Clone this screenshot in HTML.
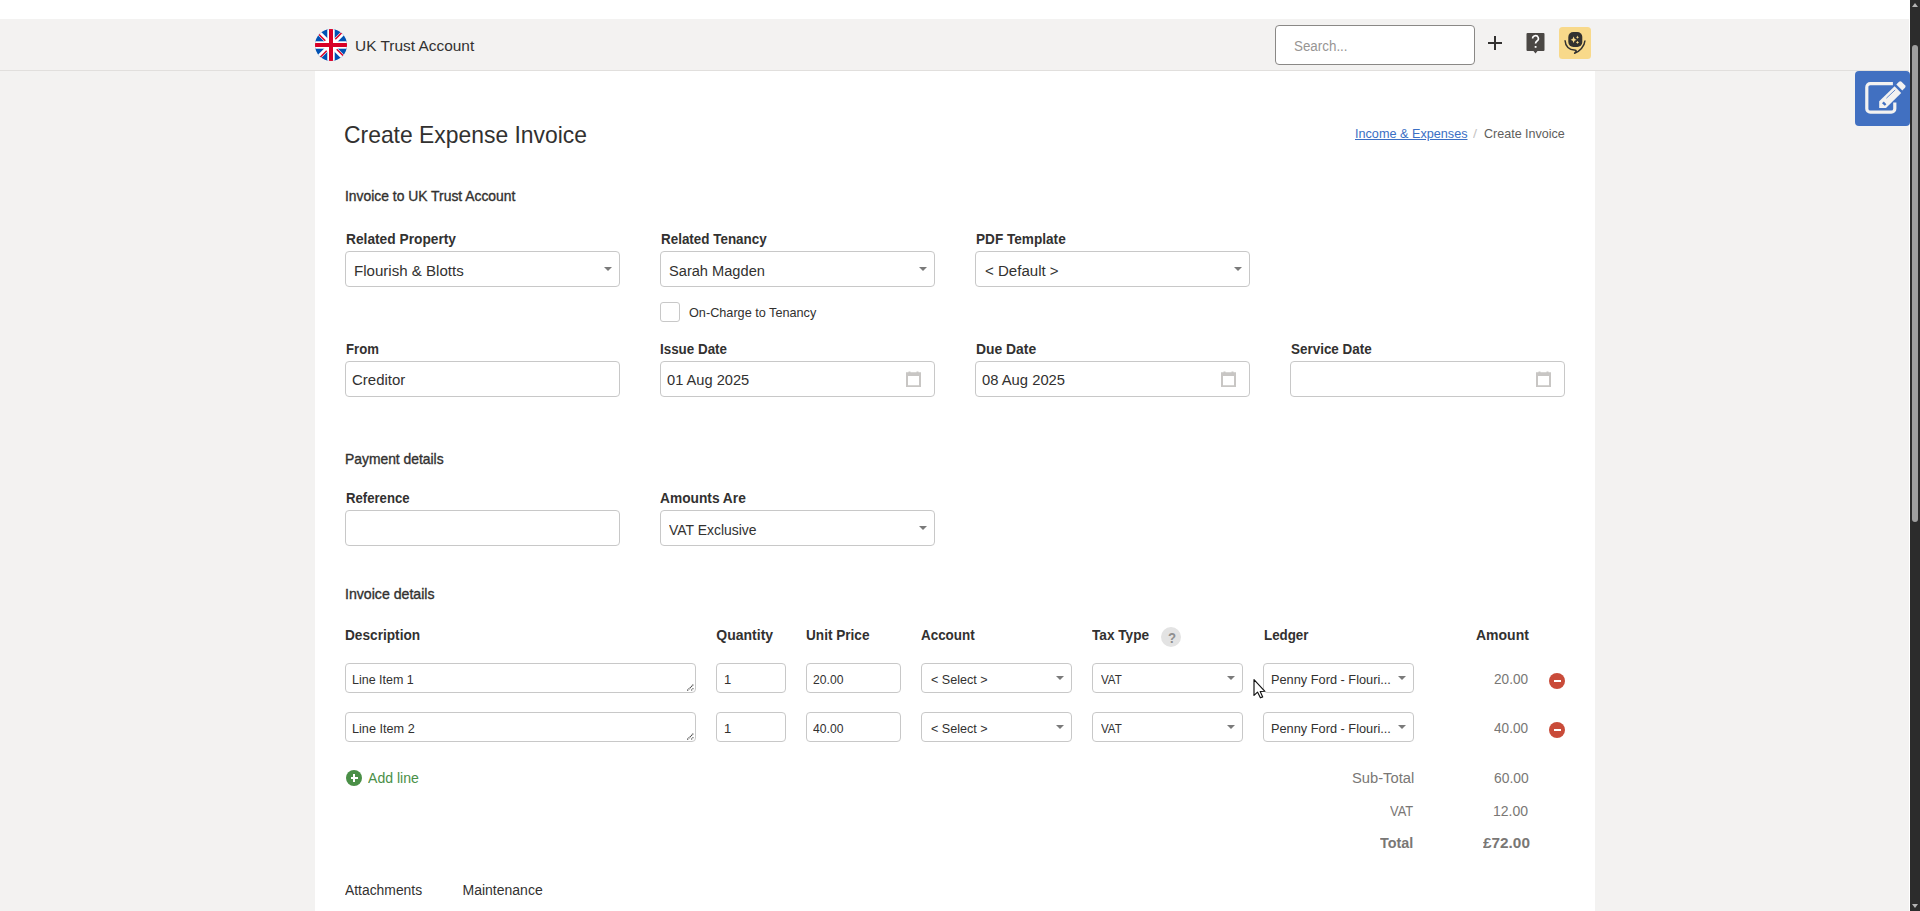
<!DOCTYPE html>
<html><head><meta charset="utf-8"><style>
html,body{margin:0;padding:0;}
body{width:1920px;height:911px;overflow:hidden;position:relative;background:#f3f2f1;font-family:"Liberation Sans", sans-serif;}
.t{position:absolute;white-space:pre;font-family:"Liberation Sans", sans-serif;}
</style></head><body>
<div style='position:absolute;left:0;top:0;width:1910px;height:19px;background:#fff'></div>
<div style='position:absolute;left:0;top:19px;width:1909px;height:51px;background:#f3f2f1;border-bottom:1px solid #e1dfdd'></div>
<div style='position:absolute;left:1909px;top:19px;width:1px;height:892px;background:#fff'></div>
<div style='position:absolute;left:315px;top:71px;width:1280px;height:840px;background:#fff'></div>
<div style='position:absolute;left:1910px;top:0;width:10px;height:911px;background:#2c2c2c'></div>
<div style='position:absolute;left:1912px;top:45px;width:6px;height:477px;background:#9f9f9f;border-radius:3px'></div>
<div style='position:absolute;left:1912px;top:3px;width:0;height:0;border-left:3px solid transparent;border-right:3px solid transparent;border-bottom:4px solid #b4b4b4'></div>
<div style='position:absolute;left:1912px;top:904px;width:0;height:0;border-left:3px solid transparent;border-right:3px solid transparent;border-top:4px solid #b4b4b4'></div>
<svg style='position:absolute;left:315px;top:29px' width='32' height='32' viewBox='0 0 32 32'>
<defs><clipPath id='cc'><circle cx='16' cy='16' r='16'/></clipPath></defs>
<g clip-path='url(#cc)'>
<rect width='32' height='32' fill='#0052b4'/>
<path d='M0 0 L32 32 M32 0 L0 32' stroke='#fff' stroke-width='4.6'/>
<path d='M2 2 L11 11' stroke='#d80027' stroke-width='1.5' transform='translate(-0.7,0.7)'/>
<path d='M21 21 L30 30' stroke='#d80027' stroke-width='1.5' transform='translate(0.7,-0.7)'/>
<path d='M30 2 L21 11' stroke='#d80027' stroke-width='1.5' transform='translate(-0.7,-0.7)'/>
<path d='M11 21 L2 30' stroke='#d80027' stroke-width='1.5' transform='translate(0.7,0.7)'/>
<rect x='12.3' y='0' width='7.4' height='32' fill='#fff'/><rect x='0' y='12.3' width='32' height='7.4' fill='#fff'/>
<rect x='14' y='0' width='4' height='32' fill='#d80027'/><rect x='0' y='14' width='32' height='4' fill='#d80027'/>
</g></svg>
<div style='position:absolute;left:1275px;top:25px;width:198px;height:38px;border:1px solid #8a8886;border-radius:4px;background:#fff'></div>
<div style='position:absolute;left:1488px;top:42px;width:14px;height:2px;background:#323130'></div>
<div style='position:absolute;left:1494px;top:36px;width:2px;height:14px;background:#323130'></div>
<svg style='position:absolute;left:1526px;top:32px' width='19' height='22' viewBox='0 0 19 22'>
<path d='M1.5 1 h16 a1 1 0 0 1 1 1 v16 a1 1 0 0 1 -1 1 h-6 l-2 2.5 l-2 -2.5 h-6 a1 1 0 0 1 -1 -1 v-16 a1 1 0 0 1 1 -1z' fill='#4b4845'/>
<path d='M6.6 6.6 a2.9 2.9 0 1 1 4.4 2.4 c-1 .7 -1.5 1.2 -1.5 2.6' fill='none' stroke='#fff' stroke-width='1.6'/>
<rect x='8.7' y='14' width='1.8' height='1.8' fill='#fff'/>
</svg>
<svg style='position:absolute;left:1559px;top:27px' width='32' height='32' viewBox='0 0 32 32'>
<rect width='32' height='32' rx='3.5' fill='#f8d98a'/>
<rect x='9.3' y='5.1' width='14' height='14.8' rx='5' fill='#323130'/>
<path d='M14.6 9.6 Q15 12.4 17.6 12.8 Q15 13.2 14.6 16 Q14.2 13.2 11.6 12.8 Q14.2 12.4 14.6 9.6z' fill='#f8d98a'/>
<path d='M18.5 8.6 Q18.7 10.1 20.1 10.3 Q18.7 10.5 18.5 12 Q18.3 10.5 16.9 10.3 Q18.3 10.1 18.5 8.6z' fill='#f8d98a'/>
<path d='M18.5 13.8 Q18.7 15.2 20.1 15.4 Q18.7 15.6 18.5 17 Q18.3 15.6 16.9 15.4 Q18.3 15.2 18.5 13.8z' fill='#f8d98a'/>
<path d='M6 13.3 C6.3 19.5 10.5 22.9 15.2 22.9 C16.6 22.9 17.6 23.4 17 24.6 L15.6 26.2 C20.5 24.5 25.5 19.5 26 13.5' fill='none' stroke='#323130' stroke-width='1.5' stroke-linejoin='round'/>
</svg>
<div style='position:absolute;left:1855px;top:71px;width:55px;height:55px;background:#4170c1;border-radius:4px'></div>
<svg style='position:absolute;left:1855px;top:71px' width='55' height='55' viewBox='0 0 55 55'>
<path d='M37.9 12.7 h-22.6 a3.5 3.5 0 0 0 -3.5 3.5 v21.5 a3.5 3.5 0 0 0 3.5 3.5 h21 a3.5 3.5 0 0 0 3.5 -3.5 v-6.2' fill='none' stroke='#f3f2f1' stroke-width='3.2'/>
<path d='M24.2 37.1 V30.3 L39.6 15.3 L46.2 21.9 L31 37.1 Z' fill='#f3f2f1'/>
<path d='M41.3 13.5 L44 10.8 a1.8 1.8 0 0 1 2.5 0 L50 14.3 a1.8 1.8 0 0 1 0 2.5 L47.3 19.5 Z' fill='#f3f2f1'/>
<path d='M27 32.2 L28.8 30.6 L31.4 33.2 L29.8 34.8 Z' fill='#4170c1'/>
<path d='M31.4 27.2 L40.2 18.9' stroke='#4170c1' stroke-width='0.8'/>
</svg>
<div style='position:absolute;left:345px;top:251px;width:273px;height:34px;border:1px solid #c8c8c8;border-radius:4px;background:#fff'></div>
<div style='position:absolute;left:604.0px;top:267px;width:0;height:0;border-left:4.0px solid transparent;border-right:4.0px solid transparent;border-top:4.5px solid #7a7a7a'></div>
<div style='position:absolute;left:660px;top:251px;width:273px;height:34px;border:1px solid #c8c8c8;border-radius:4px;background:#fff'></div>
<div style='position:absolute;left:919.0px;top:267px;width:0;height:0;border-left:4.0px solid transparent;border-right:4.0px solid transparent;border-top:4.5px solid #7a7a7a'></div>
<div style='position:absolute;left:975px;top:251px;width:273px;height:34px;border:1px solid #c8c8c8;border-radius:4px;background:#fff'></div>
<div style='position:absolute;left:1234.0px;top:267px;width:0;height:0;border-left:4.0px solid transparent;border-right:4.0px solid transparent;border-top:4.5px solid #7a7a7a'></div>
<div style='position:absolute;left:660px;top:302px;width:18px;height:18px;border:1px solid #c8c8c8;border-radius:3px;background:#fff'></div>
<div style='position:absolute;left:345px;top:361px;width:273px;height:34px;border:1px solid #c8c8c8;border-radius:4px;background:#fff'></div>
<div style='position:absolute;left:660px;top:361px;width:273px;height:34px;border:1px solid #c8c8c8;border-radius:4px;background:#fff'></div>
<div style='position:absolute;left:975px;top:361px;width:273px;height:34px;border:1px solid #c8c8c8;border-radius:4px;background:#fff'></div>
<div style='position:absolute;left:1290px;top:361px;width:273px;height:34px;border:1px solid #c8c8c8;border-radius:4px;background:#fff'></div>
<svg style='position:absolute;left:905.5px;top:371px' width='15' height='16' viewBox='0 0 15 16'><path d='M1 2.5 h13 v12.8 h-13 z' fill='none' stroke='#c8c6c4' stroke-width='2'/><rect x='0' y='1.5' width='15' height='3.5' fill='#c8c6c4'/><rect x='2.5' y='0.5' width='2' height='1.5' fill='#c8c6c4'/><rect x='10.5' y='0.5' width='2' height='1.5' fill='#c8c6c4'/></svg>
<svg style='position:absolute;left:1220.5px;top:371px' width='15' height='16' viewBox='0 0 15 16'><path d='M1 2.5 h13 v12.8 h-13 z' fill='none' stroke='#c8c6c4' stroke-width='2'/><rect x='0' y='1.5' width='15' height='3.5' fill='#c8c6c4'/><rect x='2.5' y='0.5' width='2' height='1.5' fill='#c8c6c4'/><rect x='10.5' y='0.5' width='2' height='1.5' fill='#c8c6c4'/></svg>
<svg style='position:absolute;left:1535.5px;top:371px' width='15' height='16' viewBox='0 0 15 16'><path d='M1 2.5 h13 v12.8 h-13 z' fill='none' stroke='#c8c6c4' stroke-width='2'/><rect x='0' y='1.5' width='15' height='3.5' fill='#c8c6c4'/><rect x='2.5' y='0.5' width='2' height='1.5' fill='#c8c6c4'/><rect x='10.5' y='0.5' width='2' height='1.5' fill='#c8c6c4'/></svg>
<div style='position:absolute;left:345px;top:510px;width:273px;height:34px;border:1px solid #c8c8c8;border-radius:4px;background:#fff'></div>
<div style='position:absolute;left:660px;top:510px;width:273px;height:34px;border:1px solid #c8c8c8;border-radius:4px;background:#fff'></div>
<div style='position:absolute;left:919.0px;top:526px;width:0;height:0;border-left:4.0px solid transparent;border-right:4.0px solid transparent;border-top:4.5px solid #7a7a7a'></div>
<div style='position:absolute;left:345px;top:663px;width:349px;height:28px;border:1px solid #c8c8c8;border-radius:4px;background:#fff'></div>
<svg style='position:absolute;left:686px;top:683px' width='9' height='9' viewBox='0 0 9 9'>
<path d='M1.3 7.5 L7.7 1.3 M5.3 7.4 L7.7 5' stroke='#3a3a3a' stroke-width='1.1' stroke-dasharray='1.1 0.7'/></svg>
<div style='position:absolute;left:716px;top:663px;width:68px;height:28px;border:1px solid #c8c8c8;border-radius:4px;background:#fff'></div>
<div style='position:absolute;left:806px;top:663px;width:93px;height:28px;border:1px solid #c8c8c8;border-radius:4px;background:#fff'></div>
<div style='position:absolute;left:921px;top:663px;width:149px;height:28px;border:1px solid #c8c8c8;border-radius:4px;background:#fff'></div>
<div style='position:absolute;left:1056.0px;top:676px;width:0;height:0;border-left:4.0px solid transparent;border-right:4.0px solid transparent;border-top:4.5px solid #7a7a7a'></div>
<div style='position:absolute;left:1092px;top:663px;width:149px;height:28px;border:1px solid #c8c8c8;border-radius:4px;background:#fff'></div>
<div style='position:absolute;left:1227.0px;top:676px;width:0;height:0;border-left:4.0px solid transparent;border-right:4.0px solid transparent;border-top:4.5px solid #7a7a7a'></div>
<div style='position:absolute;left:1263px;top:663px;width:149px;height:28px;border:1px solid #c8c8c8;border-radius:4px;background:#fff'></div>
<div style='position:absolute;left:1398.0px;top:676px;width:0;height:0;border-left:4.0px solid transparent;border-right:4.0px solid transparent;border-top:4.5px solid #7a7a7a'></div>
<div style='position:absolute;left:1549px;top:673px;width:16px;height:16px;border-radius:50%;background:#c94b39'></div>
<div style='position:absolute;left:1553.5px;top:680px;width:7px;height:2px;background:#fff'></div>
<div style='position:absolute;left:345px;top:712px;width:349px;height:28px;border:1px solid #c8c8c8;border-radius:4px;background:#fff'></div>
<svg style='position:absolute;left:686px;top:732px' width='9' height='9' viewBox='0 0 9 9'>
<path d='M1.3 7.5 L7.7 1.3 M5.3 7.4 L7.7 5' stroke='#3a3a3a' stroke-width='1.1' stroke-dasharray='1.1 0.7'/></svg>
<div style='position:absolute;left:716px;top:712px;width:68px;height:28px;border:1px solid #c8c8c8;border-radius:4px;background:#fff'></div>
<div style='position:absolute;left:806px;top:712px;width:93px;height:28px;border:1px solid #c8c8c8;border-radius:4px;background:#fff'></div>
<div style='position:absolute;left:921px;top:712px;width:149px;height:28px;border:1px solid #c8c8c8;border-radius:4px;background:#fff'></div>
<div style='position:absolute;left:1056.0px;top:725px;width:0;height:0;border-left:4.0px solid transparent;border-right:4.0px solid transparent;border-top:4.5px solid #7a7a7a'></div>
<div style='position:absolute;left:1092px;top:712px;width:149px;height:28px;border:1px solid #c8c8c8;border-radius:4px;background:#fff'></div>
<div style='position:absolute;left:1227.0px;top:725px;width:0;height:0;border-left:4.0px solid transparent;border-right:4.0px solid transparent;border-top:4.5px solid #7a7a7a'></div>
<div style='position:absolute;left:1263px;top:712px;width:149px;height:28px;border:1px solid #c8c8c8;border-radius:4px;background:#fff'></div>
<div style='position:absolute;left:1398.0px;top:725px;width:0;height:0;border-left:4.0px solid transparent;border-right:4.0px solid transparent;border-top:4.5px solid #7a7a7a'></div>
<div style='position:absolute;left:1549px;top:722px;width:16px;height:16px;border-radius:50%;background:#c94b39'></div>
<div style='position:absolute;left:1553.5px;top:729px;width:7px;height:2px;background:#fff'></div>
<div style='position:absolute;left:1161px;top:627px;width:20px;height:20px;border-radius:50%;background:#e3e3e3'></div>
<div class='t' style='left:1167.8px;top:628.6px;font-size:15px;line-height:17px;font-weight:700;color:#8f8f8f;transform:scaleX(0.88);transform-origin:0 0'>?</div>
<div style='position:absolute;left:346px;top:770px;width:16px;height:16px;border-radius:50%;background:#4a8f47'></div>
<div style='position:absolute;left:350.5px;top:777px;width:7.5px;height:2px;background:#fff'></div>
<div style='position:absolute;left:353.25px;top:774.2px;width:2px;height:7.6px;background:#fff'></div>
<svg style='position:absolute;left:1253px;top:677px' width='14' height='22' viewBox='0 0 14 22'>
<path d='M1 2.6 L1 18.4 L4.5 15.1 L7.4 20.8 L9.7 19.9 L7.2 14.5 L11.9 14.3 Z' fill='#fff' stroke='#111' stroke-width='1.15' stroke-linejoin='round'/></svg>
<div class='t' style='left:354.50px;top:38.00px;font-size:15.5px;line-height:15.5px;font-weight:400;color:#323130;transform:scaleX(0.9952);transform-origin:0 0;'>UK Trust Account</div>
<div class='t' style='left:1293.50px;top:38.00px;font-size:15.5px;line-height:15.5px;font-weight:400;color:#979593;transform:scaleX(0.8629);transform-origin:0 0;'>Search...</div>
<div class='t' style='left:344.45px;top:122.90px;font-size:24px;line-height:24px;font-weight:400;color:#323130;transform:scaleX(0.9536);transform-origin:0 0;'>Create Expense Invoice</div>
<div class='t' style='left:1354.63px;top:126.90px;font-size:13px;line-height:13px;font-weight:400;color:#3b6fc4;transform:scaleX(0.9729);transform-origin:0 0;text-decoration:underline;'>Income &amp; Expenses</div>
<div class='t' style='left:1473.00px;top:126.90px;font-size:13px;line-height:13px;font-weight:400;color:#c8c6c4;transform:scaleX(1.1250);transform-origin:0 0;'>/</div>
<div class='t' style='left:1484.40px;top:126.90px;font-size:13px;line-height:13px;font-weight:400;color:#605e5c;transform:scaleX(0.9642);transform-origin:0 0;'>Create Invoice</div>
<div class='t' style='left:344.94px;top:189.00px;font-size:14.5px;line-height:14.5px;font-weight:400;color:#323130;transform:scaleX(0.9565);transform-origin:0 0;-webkit-text-stroke:0.35px #323130;'>Invoice to UK Trust Account</div>
<div class='t' style='left:345.80px;top:231.80px;font-size:14px;line-height:14px;font-weight:700;color:#323130;transform:scaleX(0.9818);transform-origin:0 0;'>Related Property</div>
<div class='t' style='left:660.60px;top:231.90px;font-size:14px;line-height:14px;font-weight:700;color:#323130;transform:scaleX(0.9589);transform-origin:0 0;'>Related Tenancy</div>
<div class='t' style='left:975.60px;top:231.90px;font-size:14px;line-height:14px;font-weight:700;color:#323130;transform:scaleX(0.9716);transform-origin:0 0;'>PDF Template</div>
<div class='t' style='left:353.83px;top:263.00px;font-size:15.5px;line-height:15.5px;font-weight:400;color:#323130;transform:scaleX(0.9724);transform-origin:0 0;'>Flourish &amp; Blotts</div>
<div class='t' style='left:669.40px;top:263.00px;font-size:15.5px;line-height:15.5px;font-weight:400;color:#323130;transform:scaleX(0.9430);transform-origin:0 0;'>Sarah Magden</div>
<div class='t' style='left:985.40px;top:263.00px;font-size:15.5px;line-height:15.5px;font-weight:400;color:#323130;transform:scaleX(0.9713);transform-origin:0 0;'>&lt; Default &gt;</div>
<div class='t' style='left:688.50px;top:306.10px;font-size:13px;line-height:13px;font-weight:400;color:#323130;transform:scaleX(0.9749);transform-origin:0 0;'>On-Charge to Tenancy</div>
<div class='t' style='left:345.90px;top:341.80px;font-size:14px;line-height:14px;font-weight:700;color:#323130;transform:scaleX(0.9377);transform-origin:0 0;'>From</div>
<div class='t' style='left:660.40px;top:342.00px;font-size:14px;line-height:14px;font-weight:700;color:#323130;transform:scaleX(0.9566);transform-origin:0 0;'>Issue Date</div>
<div class='t' style='left:975.60px;top:342.00px;font-size:14px;line-height:14px;font-weight:700;color:#323130;transform:scaleX(0.9918);transform-origin:0 0;'>Due Date</div>
<div class='t' style='left:1290.70px;top:342.00px;font-size:14px;line-height:14px;font-weight:700;color:#323130;transform:scaleX(0.9600);transform-origin:0 0;'>Service Date</div>
<div class='t' style='left:352.30px;top:372.00px;font-size:15.5px;line-height:15.5px;font-weight:400;color:#323130;transform:scaleX(0.9660);transform-origin:0 0;'>Creditor</div>
<div class='t' style='left:667.40px;top:372.00px;font-size:15.5px;line-height:15.5px;font-weight:400;color:#323130;transform:scaleX(0.9439);transform-origin:0 0;'>01 Aug 2025</div>
<div class='t' style='left:982.20px;top:372.00px;font-size:15.5px;line-height:15.5px;font-weight:400;color:#323130;transform:scaleX(0.9542);transform-origin:0 0;'>08 Aug 2025</div>
<div class='t' style='left:345.24px;top:452.00px;font-size:14.5px;line-height:14.5px;font-weight:400;color:#323130;transform:scaleX(0.9557);transform-origin:0 0;-webkit-text-stroke:0.35px #323130;'>Payment details</div>
<div class='t' style='left:345.70px;top:490.80px;font-size:14px;line-height:14px;font-weight:700;color:#323130;transform:scaleX(0.9394);transform-origin:0 0;'>Reference</div>
<div class='t' style='left:660.40px;top:490.80px;font-size:14px;line-height:14px;font-weight:700;color:#323130;transform:scaleX(0.9817);transform-origin:0 0;'>Amounts Are</div>
<div class='t' style='left:669.00px;top:522.00px;font-size:15.5px;line-height:15.5px;font-weight:400;color:#323130;transform:scaleX(0.8990);transform-origin:0 0;'>VAT Exclusive</div>
<div class='t' style='left:344.93px;top:587.00px;font-size:14.5px;line-height:14.5px;font-weight:400;color:#323130;transform:scaleX(0.9742);transform-origin:0 0;-webkit-text-stroke:0.35px #323130;'>Invoice details</div>
<div class='t' style='left:345.40px;top:628.00px;font-size:14px;line-height:14px;font-weight:700;color:#323130;transform:scaleX(0.9756);transform-origin:0 0;'>Description</div>
<div class='t' style='left:716.30px;top:628.00px;font-size:14px;line-height:14px;font-weight:700;color:#323130;'>Quantity</div>
<div class='t' style='left:806.30px;top:628.00px;font-size:14px;line-height:14px;font-weight:700;color:#323130;transform:scaleX(0.9715);transform-origin:0 0;'>Unit Price</div>
<div class='t' style='left:921.20px;top:628.00px;font-size:14px;line-height:14px;font-weight:700;color:#323130;transform:scaleX(0.9585);transform-origin:0 0;'>Account</div>
<div class='t' style='left:1092.10px;top:628.00px;font-size:14px;line-height:14px;font-weight:700;color:#323130;transform:scaleX(0.9741);transform-origin:0 0;'>Tax Type</div>
<div class='t' style='left:1263.50px;top:628.00px;font-size:14px;line-height:14px;font-weight:700;color:#323130;transform:scaleX(0.9528);transform-origin:0 0;'>Ledger</div>
<div class='t' style='left:1476.00px;top:628.00px;font-size:14px;line-height:14px;font-weight:700;color:#323130;'>Amount</div>
<div class='t' style='left:351.74px;top:673.00px;font-size:13px;line-height:13px;font-weight:400;color:#323130;transform:scaleX(0.9606);transform-origin:0 0;'>Line Item 1</div>
<div class='t' style='left:724.00px;top:673.00px;font-size:13px;line-height:13px;font-weight:400;color:#323130;'>1</div>
<div class='t' style='left:813.00px;top:673.00px;font-size:13px;line-height:13px;font-weight:400;color:#323130;transform:scaleX(0.9349);transform-origin:0 0;'>20.00</div>
<div class='t' style='left:931.20px;top:673.00px;font-size:13px;line-height:13px;font-weight:400;color:#323130;transform:scaleX(0.9664);transform-origin:0 0;'>&lt; Select &gt;</div>
<div class='t' style='left:1101.20px;top:673.00px;font-size:13px;line-height:13px;font-weight:400;color:#323130;transform:scaleX(0.8884);transform-origin:0 0;'>VAT</div>
<div class='t' style='left:1271.22px;top:673.00px;font-size:13px;line-height:13px;font-weight:400;color:#323130;transform:scaleX(0.9819);transform-origin:0 0;'>Penny Ford - Flouri...</div>
<div class='t' style='left:1493.90px;top:671.00px;font-size:15.5px;line-height:15.5px;font-weight:400;color:#797775;transform:scaleX(0.8783);transform-origin:0 0;'>20.00</div>
<div class='t' style='left:351.73px;top:722.00px;font-size:13px;line-height:13px;font-weight:400;color:#323130;transform:scaleX(0.9749);transform-origin:0 0;'>Line Item 2</div>
<div class='t' style='left:724.00px;top:722.00px;font-size:13px;line-height:13px;font-weight:400;color:#323130;'>1</div>
<div class='t' style='left:813.00px;top:722.00px;font-size:13px;line-height:13px;font-weight:400;color:#323130;transform:scaleX(0.9349);transform-origin:0 0;'>40.00</div>
<div class='t' style='left:931.20px;top:722.00px;font-size:13px;line-height:13px;font-weight:400;color:#323130;transform:scaleX(0.9664);transform-origin:0 0;'>&lt; Select &gt;</div>
<div class='t' style='left:1101.20px;top:722.00px;font-size:13px;line-height:13px;font-weight:400;color:#323130;transform:scaleX(0.8884);transform-origin:0 0;'>VAT</div>
<div class='t' style='left:1271.22px;top:722.00px;font-size:13px;line-height:13px;font-weight:400;color:#323130;transform:scaleX(0.9819);transform-origin:0 0;'>Penny Ford - Flouri...</div>
<div class='t' style='left:1493.90px;top:720.00px;font-size:15.5px;line-height:15.5px;font-weight:400;color:#797775;transform:scaleX(0.8783);transform-origin:0 0;'>40.00</div>
<div class='t' style='left:367.90px;top:770.80px;font-size:14px;line-height:14px;font-weight:400;color:#4a8f47;transform:scaleX(1.0058);transform-origin:0 0;'>Add line</div>
<div class='t' style='left:1351.60px;top:770.00px;font-size:15.5px;line-height:15.5px;font-weight:400;color:#797775;transform:scaleX(0.9502);transform-origin:0 0;'>Sub-Total</div>
<div class='t' style='left:1493.80px;top:770.00px;font-size:15.5px;line-height:15.5px;font-weight:400;color:#797775;transform:scaleX(0.8936);transform-origin:0 0;'>60.00</div>
<div class='t' style='left:1389.80px;top:803.00px;font-size:15.5px;line-height:15.5px;font-weight:400;color:#797775;transform:scaleX(0.8317);transform-origin:0 0;'>VAT</div>
<div class='t' style='left:1493.40px;top:803.00px;font-size:15.5px;line-height:15.5px;font-weight:400;color:#797775;transform:scaleX(0.9039);transform-origin:0 0;'>12.00</div>
<div class='t' style='left:1379.50px;top:835.00px;font-size:15.5px;line-height:15.5px;font-weight:700;color:#797775;transform:scaleX(0.9278);transform-origin:0 0;'>Total</div>
<div class='t' style='left:1482.50px;top:835.00px;font-size:15.5px;line-height:15.5px;font-weight:700;color:#797775;transform:scaleX(0.9896);transform-origin:0 0;'>£72.00</div>
<div class='t' style='left:345.40px;top:883.20px;font-size:14px;line-height:14px;font-weight:400;color:#323130;transform:scaleX(0.9908);transform-origin:0 0;'>Attachments</div>
<div class='t' style='left:462.50px;top:883.20px;font-size:14px;line-height:14px;font-weight:400;color:#323130;'>Maintenance</div>
</body></html>
